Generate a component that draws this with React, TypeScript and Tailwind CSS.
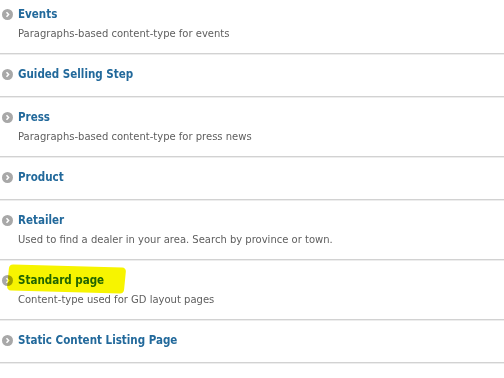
import React from "react";

type ContentType = {
  name: string;
  description?: string;
  highlight?: boolean;
};

const types: ContentType[] = [
  { name: "Events", description: "Paragraphs-based content-type for events" },
  { name: "Guided Selling Step" },
  { name: "Press", description: "Paragraphs-based content-type for press news" },
  { name: "Product" },
  { name: "Retailer", description: "Used to find a dealer in your area. Search by province or town." },
  { name: "Standard page", description: "Content-type used for GD layout pages", highlight: true },
  { name: "Static Content Listing Page" },
  { name: "Vacancy" },
];

const ChevronCircle = () => (
  <svg width="11" height="11" viewBox="0 0 11 11" className="shrink-0">
    <circle cx="5.5" cy="5.5" r="5.5" fill="#a8a8a8" />
    <path d="M4.5 3.2 L6.6 5.5 L4.5 7.8" fill="none" stroke="#fff" strokeWidth="1.5" />
  </svg>
);

const Row = ({ item }: { item: ContentType }) => (
  <li
    className={
      item.description
        ? "relative border-b border-[#d2d2d2] shadow-[0_1px_0_#ededed] pt-[12px] pb-[11px] pl-[2px]"
        : "relative border-b border-[#d2d2d2] shadow-[0_1px_0_#ededed] pt-[12px] pb-[14px] pl-[2px]"
    }
  >
    {item.highlight && (
      // yellow marker scribble over the title
      <div className="absolute left-[8px] top-[6px] w-[117px] h-[26px] bg-[#f7f400] rounded-[4px] rotate-[1.5deg] skew-x-[-4deg] mix-blend-multiply z-10" />
    )}
    <div className="flex items-center gap-[5px] h-[16px]">
      <ChevronCircle />
      <a className="font-['DejaVu_Sans_Condensed','DejaVu_Sans',sans-serif] text-[11.5px] leading-[16px] font-bold text-[#22699b]">
        {item.name}
      </a>
    </div>
    {item.description && (
      <p className="mt-[4px] ml-[16px] text-[10px] leading-[16px] text-[#5e5e5e]">{item.description}</p>
    )}
  </li>
);

export default function App() {
  return (
    <div className="w-[504px] h-[378px] overflow-hidden bg-white font-['DejaVu_Sans',sans-serif]">
      <ul className="-mt-[6px]">
        {types.map((t) => (
          <Row key={t.name} item={t} />
        ))}
      </ul>
    </div>
  );
}
